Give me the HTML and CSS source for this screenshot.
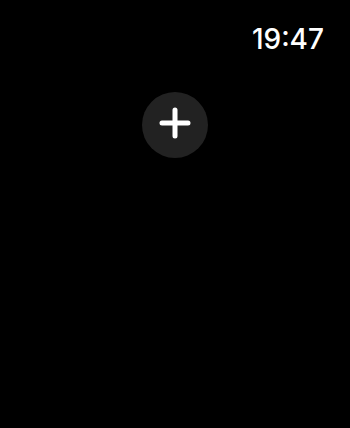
FILE: index.html
```html
<!DOCTYPE html>
<html lang="en">
<head>
  <meta charset="UTF-8" />
  <meta name="viewport" content="width=device-width, initial-scale=1.0"/>
  <link rel="stylesheet" href="styles.css">
</head>
<body>
  <div class="statusbar">
    <span class="clock">19:47</span>
  </div>

  <div class="middle">
    <button class="addbtn" aria-label="Add">
      <svg width="32" height="32" viewBox="0 0 32 32">
        <path d="M16 3 V29 M3 16 H29" stroke="#fff" stroke-width="5" stroke-linecap="round" fill="none"/>
      </svg>
    </button>
  </div>
</body>
</html>
```

FILE: styles.css
```css
html, body {
  margin: 0;
  background-color: #000;
  height: 100%;
}
body {
  color: white;
  font-family: Inter, "Noto Sans", sans-serif;
}
.statusbar {
  display: flex;
  justify-content: flex-end;
  padding: 21px 26px 0 0;
  height: 36px;
}
.clock {
  font-size: 28px;
  font-weight: 500;
  line-height: 36px;
}
.middle {
  display: flex;
  justify-content: center;
  padding-top: 35px;
}
.addbtn {
  width: 66px;
  height: 66px;
  border-radius: 50%;
  border: none;
  background-color: #222;
  display: flex;
  align-items: center;
  justify-content: center;
  padding: 0;
}
.addbtn svg {
  margin-top: -4px;
}
```
